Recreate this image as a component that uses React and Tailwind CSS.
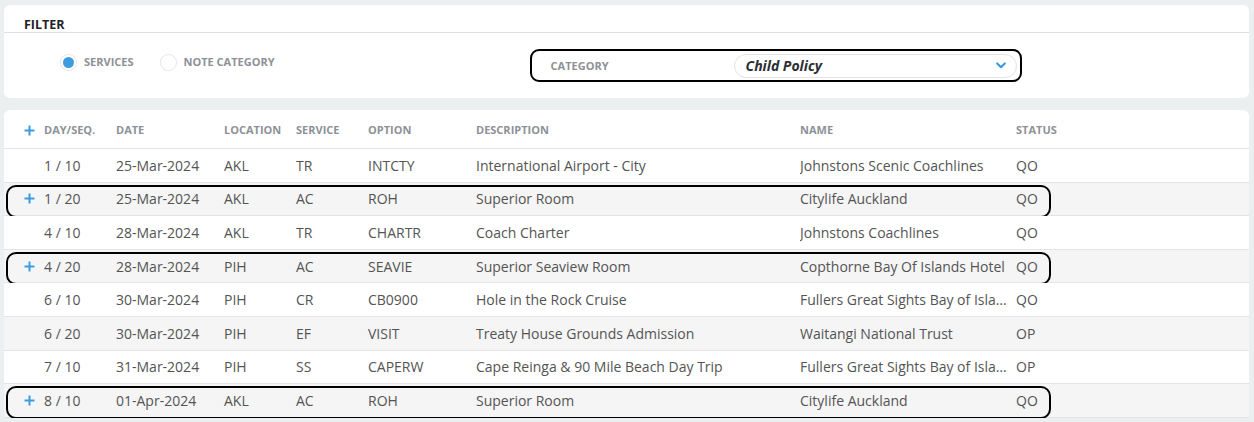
import { useState } from "react";

const rows = [
  { seq: "1 / 10", date: "25-Mar-2024", loc: "AKL", svc: "TR", opt: "INTCTY", desc: "International Airport - City", name: "Johnstons Scenic Coachlines", status: "QO" },
  { seq: "1 / 20", date: "25-Mar-2024", loc: "AKL", svc: "AC", opt: "ROH", desc: "Superior Room", name: "Citylife Auckland", status: "QO", mark: true },
  { seq: "4 / 10", date: "28-Mar-2024", loc: "AKL", svc: "TR", opt: "CHARTR", desc: "Coach Charter", name: "Johnstons Coachlines", status: "QO" },
  { seq: "4 / 20", date: "28-Mar-2024", loc: "PIH", svc: "AC", opt: "SEAVIE", desc: "Superior Seaview Room", name: "Copthorne Bay Of Islands Hotel", status: "QO", mark: true },
  { seq: "6 / 10", date: "30-Mar-2024", loc: "PIH", svc: "CR", opt: "CB0900", desc: "Hole in the Rock Cruise", name: "Fullers Great Sights Bay of Islands", status: "QO" },
  { seq: "6 / 20", date: "30-Mar-2024", loc: "PIH", svc: "EF", opt: "VISIT", desc: "Treaty House Grounds Admission", name: "Waitangi National Trust", status: "OP" },
  { seq: "7 / 10", date: "31-Mar-2024", loc: "PIH", svc: "SS", opt: "CAPERW", desc: "Cape Reinga & 90 Mile Beach Day Trip", name: "Fullers Great Sights Bay of Islands", status: "OP" },
  { seq: "8 / 10", date: "01-Apr-2024", loc: "AKL", svc: "AC", opt: "ROH", desc: "Superior Room", name: "Citylife Auckland", status: "QO", mark: true },
];

const cols = "grid grid-cols-[40px_72px_108px_72px_72px_108px_324px_216px_1fr] items-center";

function Plus() {
  return (
    <svg width="11" height="11" viewBox="0 0 11 11" className="text-[#3d9be0]">
      <path d="M5.5 0.5v10M0.5 5.5h10" stroke="currentColor" strokeWidth="2" />
    </svg>
  );
}

function Radio({ checked, label, onClick }) {
  return (
    <button onClick={onClick} className="flex items-center gap-[7px]">
      <span className="w-[17px] h-[17px] rounded-full border border-[#e3e5e8] bg-white flex items-center justify-center">
        {checked && <span className="w-[11px] h-[11px] rounded-full bg-[#3d9be0]" />}
      </span>
      <span className="text-[11px] font-bold text-[#8d9197]">{label}</span>
    </button>
  );
}

export default function App() {
  const [mode, setMode] = useState("services");

  return (
    <div className="min-h-screen bg-[#eceff0] pt-[5px] pl-[4px] pr-[5px] font-['Open_Sans',sans-serif]">
      <div className="bg-white rounded-[6px] h-[93px]">
        <div className="h-[28px] border-b border-[#e0dde9] pl-[20px] flex items-end pb-[1px]">
          <span className="text-[12.5px] leading-[13px] font-bold text-[#1f2328]">FILTER</span>
        </div>
        <div className="flex items-start pt-[16px]">
          <div className="flex items-center gap-[26px] pl-[56px] pt-[5px]">
            <Radio checked={mode === "services"} label="SERVICES" onClick={() => setMode("services")} />
            <Radio checked={mode === "note"} label="NOTE CATEGORY" onClick={() => setMode("note")} />
          </div>
          <div className="ml-[255px] w-[492px] h-[33px] border-2 border-black rounded-[9px] flex items-center pl-[19px] pr-[3px]">
            <span className="text-[11px] font-bold text-[#8d9197] w-[183px] pt-[1px]">CATEGORY</span>
            <div className="flex-1 h-[24px] rounded-full border border-[#e1e3e6] flex items-center pl-[11px] pr-[10px]">
              <span className="text-[14px] font-bold italic text-[#2b2f33] flex-1">Child Policy</span>
              <svg width="10" height="7" viewBox="0 0 10 7">
                <path d="M1.2 1.5L5 5.2L8.8 1.5" fill="none" stroke="#3d9be0" strokeWidth="2.2" strokeLinecap="round" strokeLinejoin="round" />
              </svg>
            </div>
          </div>
        </div>
      </div>

      <div className="mt-[12px] bg-white rounded-t-[6px] overflow-hidden">
        <div className={`${cols} h-[39px] border-b border-[#e4e4e4] text-[11px] font-bold text-[#8d9197] pt-[2px]`}>
          <div className="pl-[20px] flex items-center"><Plus /></div>
          <div>DAY/SEQ.</div>
          <div>DATE</div>
          <div>LOCATION</div>
          <div>SERVICE</div>
          <div>OPTION</div>
          <div>DESCRIPTION</div>
          <div>NAME</div>
          <div>STATUS</div>
        </div>
        {rows.map((r, i) => (
          <div
            key={i}
            className={`${cols} relative h-[33.6px] border-b border-[#e4e4e4] text-[14px] text-[#545454] ${i % 2 === 1 ? "bg-[#f5f5f5]" : "bg-white"}`}
          >
            <div className="pl-[20px] flex items-center">{r.mark && <Plus />}</div>
            <div>{r.seq}</div>
            <div>{r.date}</div>
            <div>{r.loc}</div>
            <div>{r.svc}</div>
            <div>{r.opt}</div>
            <div className="truncate pr-[8px]">{r.desc}</div>
            <div className="truncate pr-[6px]">{r.name}</div>
            <div>{r.status}</div>
            {r.mark && (
              <div className="absolute left-[2px] top-[2px] w-[1045px] h-[33px] border-2 border-black rounded-[10px] pointer-events-none" />
            )}
          </div>
        ))}
      </div>
    </div>
  );
}
